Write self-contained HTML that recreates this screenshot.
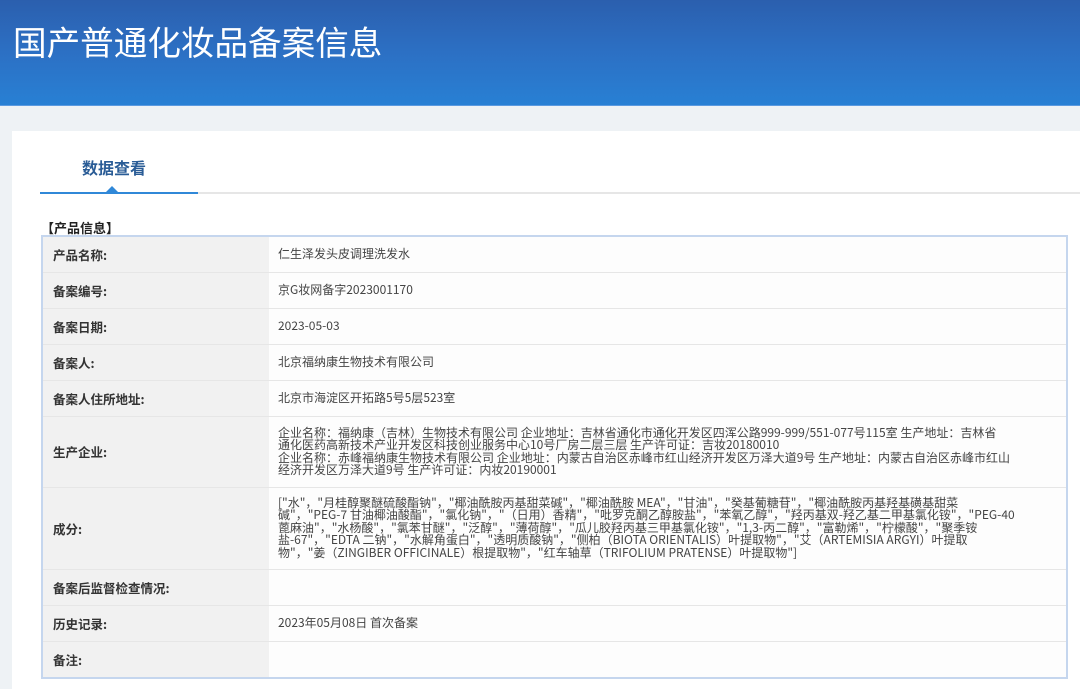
<!DOCTYPE html>
<html><head><meta charset="utf-8"><style>
*{margin:0;padding:0;box-sizing:border-box}
body{width:1080px;height:689px;overflow:hidden;background:#eef2f5;font-family:"Liberation Sans","Microsoft YaHei","Noto Sans CJK SC",sans-serif;position:relative}
.hd{position:absolute;left:0;top:0;width:1080px;height:106px;background:linear-gradient(180deg,#2b5fae 0%,#2c70c4 50%,#2880d4 100%);border-bottom:1px solid #5b9ae0}
.hd h1{position:absolute;left:13px;top:16px;font-size:33.6px;font-weight:normal;color:#fff;letter-spacing:0px;font-family:"Noto Sans CJK SC",sans-serif}
.card{position:absolute;left:12px;top:131px;width:1068px;height:558px;background:#fff}
.tab{position:absolute;left:82px;top:155px;font-size:16px;font-weight:bold;color:#2a5c96;font-family:"Noto Sans CJK SC",sans-serif}
.ln{position:absolute;left:40px;top:192px;width:1040px;height:2px;background:#e6e6e6}
.ln2{position:absolute;left:40px;top:192px;width:158px;height:2px;background:#3088d8}
.tri{position:absolute;left:106px;top:186px;width:0;height:0;border-left:6px solid transparent;border-right:6px solid transparent;border-bottom:6px solid #3088d8}
.sec{position:absolute;left:41px;top:218px;font-size:13px;font-weight:bold;color:#222;font-family:"Noto Sans CJK SC",sans-serif}
table{position:absolute;left:41px;top:235px;width:1027px;border-collapse:collapse;border:2px solid #c5d6ee;font-family:"Noto Sans CJK SC",sans-serif}
td{border-bottom:1px solid #e6e6e6;font-size:12px;color:#444;vertical-align:middle}
td.l{width:227px;background:#f1f1f1;font-weight:bold;color:#333;padding-left:10px;font-size:12.5px}
td.v{padding-left:9px;line-height:12.4px;white-space:nowrap;background:#fdfdfd}
</style></head><body>
<div class="hd"><h1>国产普通化妆品备案信息</h1></div>
<div class="card"></div>
<div class="tab">数据查看</div>
<div class="ln"></div><div class="ln2"></div><div class="tri"></div>
<div class="sec">【产品信息】</div>
<table>
<tr style="height:36px"><td class="l">产品名称:</td><td class="v">仁生泽发头皮调理洗发水</td></tr>
<tr style="height:36px"><td class="l">备案编号:</td><td class="v">京G妆网备字2023001170</td></tr>
<tr style="height:36px"><td class="l">备案日期:</td><td class="v">2023-05-03</td></tr>
<tr style="height:36px"><td class="l">备案人:</td><td class="v">北京福纳康生物技术有限公司</td></tr>
<tr style="height:36px"><td class="l">备案人住所地址:</td><td class="v">北京市海淀区开拓路5号5层523室</td></tr>
<tr style="height:71px"><td class="l">生产企业:</td><td class="v">企业名称：福纳康（吉林）生物技术有限公司 企业地址：吉林省通化市通化开发区四浑公路999-999/551-077号115室 生产地址：吉林省<br>通化医药高新技术产业开发区科技创业服务中心10号厂房二层三层 生产许可证：吉妆20180010<br>企业名称：赤峰福纳康生物技术有限公司 企业地址：内蒙古自治区赤峰市红山经济开发区万泽大道9号 生产地址：内蒙古自治区赤峰市红山<br>经济开发区万泽大道9号 生产许可证：内妆20190001</td></tr>
<tr style="height:82px"><td class="l">成分:</td><td class="v">["水"，"月桂醇聚醚硫酸酯钠"，"椰油酰胺丙基甜菜碱"，"椰油酰胺 MEA"，"甘油"，"癸基葡糖苷"，"椰油酰胺丙基羟基磺基甜菜<br>碱"，"PEG-7 甘油椰油酸酯"，"氯化钠"，"（日用）香精"，"吡罗克酮乙醇胺盐"，"苯氧乙醇"，"羟丙基双-羟乙基二甲基氯化铵"，"PEG-40<br>蓖麻油"，"水杨酸"，"氯苯甘醚"，"泛醇"，"薄荷醇"，"瓜儿胶羟丙基三甲基氯化铵"，"1,3-丙二醇"，"富勒烯"，"柠檬酸"，"聚季铵<br>盐-67"，"EDTA 二钠"，"水解角蛋白"，"透明质酸钠"，"侧柏（BIOTA ORIENTALIS）叶提取物"，"艾（ARTEMISIA ARGYI）叶提取<br>物"，"姜（ZINGIBER OFFICINALE）根提取物"，"红车轴草（TRIFOLIUM PRATENSE）叶提取物"]</td></tr>
<tr style="height:36px"><td class="l">备案后监督检查情况:</td><td class="v"></td></tr>
<tr style="height:36px"><td class="l">历史记录:</td><td class="v">2023年05月08日 首次备案</td></tr>
<tr style="height:37px"><td class="l">备注:</td><td class="v"></td></tr>
</table>
</body></html>
